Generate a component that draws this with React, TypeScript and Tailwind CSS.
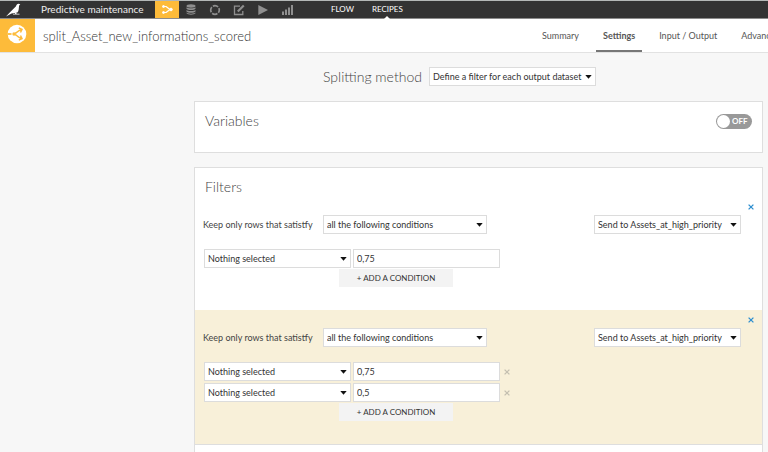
import { useState } from "react"

function Caret() {
  return (
    <svg viewBox="0 0 7 4" className="pointer-events-none absolute right-1 top-2 h-1 w-[7px]" aria-hidden="true">
      <path d="M0.3 0h6.4L3.5 3.8z" fill="#111" />
    </svg>
  )
}

function Select({ label, options, className = "" }: { label: string; options: string[]; className?: string }) {
  return (
    <div className={`relative shrink-0 ${className}`}>
      <select
        aria-label={label}
        className="block h-[19px] w-full appearance-none border border-[#dcdcdc] bg-white pl-[3px] pr-3 text-[9px] leading-[17px] text-[#333] outline-none"
      >
        {options.map((o) => (
          <option key={o}>{o}</option>
        ))}
      </select>
      <Caret />
    </div>
  )
}

function Cross() {
  return (
    <svg viewBox="0 0 6 6" className="size-1.5" aria-hidden="true">
      <path d="M0.6 0.6l4.8 4.8M5.4 0.6L0.6 5.4" stroke="currentColor" strokeWidth="1.3" fill="none" />
    </svg>
  )
}

function Filter({ values, highlighted = false }: { values: string[]; highlighted?: boolean }) {
  return (
    <div className={highlighted ? "bg-[#f8f0d9] pb-[23px]" : "bg-white pb-[23px]"}>
      <div className="flex h-[18px] items-center justify-end pr-2 pt-0.5">
        <button aria-label="Remove filter" className="text-[#2e8fd0]">
          <Cross />
        </button>
      </div>
      <div className="flex items-center pl-2 pr-[21px]">
        <span className="w-[120px] whitespace-nowrap text-[9px] leading-[19px] text-[#444]">
          Keep only rows that satistfy
        </span>
        <Select label="Match mode" options={["all the following conditions"]} className="w-[164px]" />
        <Select label="Output dataset" options={["Send to Assets_at_high_priority"]} className="ml-auto w-[147px]" />
      </div>
      <div className="mt-[15px] flex flex-col gap-0.5 pl-[9px]">
        {values.map((value, i) => (
          <div key={i} className="flex items-center">
            <Select label="Column" options={["Nothing selected"]} className="w-[147px]" />
            <input
              aria-label="Value"
              defaultValue={value}
              className="ml-0.5 h-[19px] w-[147px] border border-[#dcdcdc] bg-white px-[3px] text-[9px] leading-[17px] text-[#333] outline-none"
            />
            {values.length > 1 && (
              <button aria-label="Remove condition" className="ml-1 text-[#c4bfb0]">
                <Cross />
              </button>
            )}
          </div>
        ))}
      </div>
      <button className="ml-36 mt-px block h-[18px] w-[114px] bg-[#f3f3f3] text-[8px] leading-[18px] text-[#333]">
        + ADD A CONDITION
      </button>
    </div>
  )
}

function TopBar() {
  return (
    <div className="flex h-[19px] items-stretch border-b border-t border-b-[#8b8b8b] border-t-[#b4b8b7] bg-[#333] text-[#8f8f8f]">
      <a href="#home" aria-label="Home" className="flex w-[41px] items-center pl-1.5">
        <svg viewBox="0 0 16 14" className="h-3.5 w-4" fill="#fff">
          <path d="M14.3 1.6L12.8 .8C11.200 .7 10.400 1.900 9.800 3.500L4 9.300L0 13.500L5.500 10.600L11.300 9.400C13 8.200 12.700 5 13.100 2.500z" />
          <path d="M8.800 9.500l.4 1.200H7v.7h6.500v-.7h-2.900l-.5-1.300z" />
        </svg>
      </a>
      <span className="w-[114px] whitespace-nowrap text-[10px] leading-[17px] text-[#eee]">Predictive maintenance</span>
      <nav className="flex items-stretch">
        <a href="#flow" aria-label="Flow" className="flex w-6 items-center justify-center bg-[#fdbb3a]">
          <svg viewBox="0 0 11 9" className="h-[9px] w-[11px]" fill="#fff" stroke="#fff">
            <path d="M1.500 1.500H4L8 4.500L4 7.500H1.500" fill="none" strokeWidth="1.200" strokeLinejoin="round" />
            <circle cx="1.500" cy="1.500" r="1" />
            <circle cx="1.500" cy="7.500" r="1" />
            <circle cx="9" cy="4.500" r="1.300" />
          </svg>
        </a>
        <a href="#datasets" aria-label="Datasets" className="flex w-6 items-center justify-center">
          <svg viewBox="0 0 10 11" className="h-[11px] w-2.5" fill="currentColor">
            <ellipse cx="5" cy="2" rx="4.500" ry="1.700" />
            <path d="M.5 3.200c1 1.500 8 1.500 9 0v1.600c-1 1.700-8 1.700-9 0zM.5 5.900c1 1.500 8 1.500 9 0v1.600c-1 1.700-8 1.700-9 0zM.5 8.500c1 1.500 8 1.500 9 0v.8c-1 1.900-8 1.900-9 0z" />
          </svg>
        </a>
        <a href="#recipes" aria-label="Recipes" className="flex w-6 items-center justify-center">
          <svg viewBox="0 0 12 12" className="size-3" fill="none" stroke="currentColor">
            <circle cx="6" cy="6" r="4.300" strokeWidth="1.700" strokeDasharray="5.550 1.200" strokeDashoffset="2.700" />
          </svg>
        </a>
        <a href="#notebooks" aria-label="Notebooks" className="flex w-6 items-center justify-center">
          <svg viewBox="0 0 12 12" className="size-3" fill="none" stroke="currentColor" strokeWidth="1.300">
            <path d="M7 2.200H1.500v8.300H9.800V7" />
            <path d="M4.800 7.600L10.800 1.500" strokeWidth="2.200" />
          </svg>
        </a>
        <a href="#jobs" aria-label="Jobs" className="flex w-6 items-center justify-center">
          <svg viewBox="0 0 10 10" className="size-2.5" fill="currentColor">
            <path d="M.3 0L10 5L.3 10z" />
          </svg>
        </a>
        <a href="#insights" aria-label="Insights" className="flex w-6 items-center justify-center">
          <svg viewBox="0 0 11 10" className="h-2.5 w-[11px]" fill="currentColor">
            <path d="M0 6.500h2V10H0zM3 4.500h2v5.500H3zM6 2.500h2V10H6zM9 0h2v10H9z" />
          </svg>
        </a>
      </nav>
      <nav className="ml-8 flex gap-[18px] text-[8px] leading-[17px] text-white">
        <a href="#flow-view">FLOW</a>
        <a href="#recipes-view" className="relative">
          RECIPES
          <svg viewBox="0 0 6 3" className="absolute -bottom-px left-1/2 h-[3px] w-1.5 -translate-x-1/2" fill="#fff">
            <path d="M0 3L3 0L6 3z" />
          </svg>
        </a>
      </nav>
    </div>
  )
}

const tabs = ["Summary", "Settings", "Input / Output", "Advanced"]

function RecipeHeader() {
  return (
    <header className="flex h-[34px] items-stretch overflow-hidden border-b border-[#e2e2e2] bg-white">
      <div className="flex w-[35px] shrink-0 items-start justify-center bg-[#fdbb3a] pt-[5px]">
        <svg viewBox="0 0 20 20" className="mr-px size-5" fill="none">
          <circle cx="10" cy="10" r="9.300" fill="#fff" />
          <path d="M.5 10H4.500" stroke="#fdbb3a" strokeWidth="1.800" />
          <path
            d="M8 9.200C10.500 9 10.500 6.500 14.500 5.500M8 10.800C10.500 11 10.500 13.500 14.500 14.500M11.800 3.900L15 5.400L13.500 8.500M11.800 16.100L15 14.600L13.500 11.500"
            stroke="#fdbb3a"
            strokeWidth="1.500"
          />
          <circle cx="7" cy="10" r="1.700" fill="#fdbb3a" />
        </svg>
      </div>
      <h1 className="w-[500px] shrink-0 pl-2 text-[13px] font-light leading-[34px] text-[#333]">
        split_Asset_new_informations_scored
      </h1>
      <nav className="flex gap-2.5">
        {tabs.map((tab) => (
          <a
            key={tab}
            href={`#${tab}`}
            className={
              tab === "Settings"
                ? "whitespace-nowrap border-b-2 border-[#777] px-[7px] text-[9px] font-bold leading-[33px] text-[#555]"
                : "whitespace-nowrap px-[7px] text-[9px] leading-[33px] text-[#555]"
            }
          >
            {tab}
          </a>
        ))}
      </nav>
    </header>
  )
}

export default function App() {
  const [on, setOn] = useState(false)

  return (
    <div className="h-screen overflow-hidden bg-[#f7f7f7] font-['Lato',sans-serif]">
      <TopBar />
      <RecipeHeader />
      <main className="ml-[194px] mr-[5px]">
        <div className="flex items-center pb-[15px] pl-[129px] pt-3.5">
          <span className="w-[106px] whitespace-nowrap text-[14px] font-light leading-[19px] text-[#444]">Splitting method</span>
          <Select label="Splitting method" options={["Define a filter for each output dataset"]} className="w-[167px]" />
        </div>

        {/* Variables */}
        <section className="flex h-[52px] items-start justify-between border border-[#dedede] bg-white px-2.5">
          <h2 className="mt-[9px] text-[14px] font-light leading-5 text-[#444]">Variables</h2>
          <label className="relative mt-3 flex h-[15px] w-9 cursor-pointer items-center rounded-full bg-[#999]">
            <input
              type="checkbox"
              aria-label="Variables"
              checked={on}
              onChange={(e) => setOn(e.target.checked)}
              className="absolute inset-0 cursor-pointer appearance-none"
            />
            <span className={on ? "ml-[22px] size-[13px] rounded-full bg-white" : "ml-px size-[13px] rounded-full bg-white"} />
            {!on && <span className="ml-0.5 text-[8px] font-bold leading-[15px] text-white">OFF</span>}
          </label>
        </section>

        {/* Filters */}
        <section className="mt-3.5 border border-[#dedede] bg-white">
          <h2 className="pl-2.5 pt-[9px] text-[14px] font-light leading-5 text-[#444]">Filters</h2>
          <Filter values={["0,75"]} />
          <Filter values={["0,75", "0,5"]} highlighted />
          <div className="h-10 border-t border-[#dedede]" />
        </section>
      </main>
    </div>
  )
}
